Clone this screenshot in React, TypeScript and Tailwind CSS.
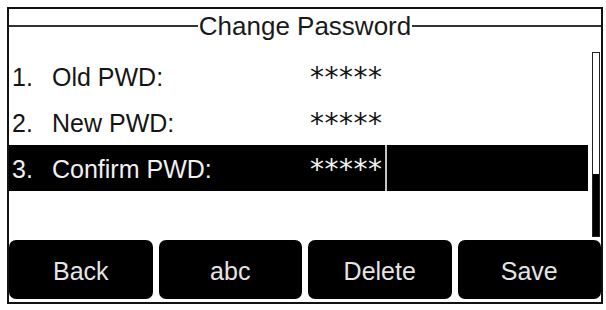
const rows = [
  { n: '1.', label: 'Old PWD:', value: '*****' },
  { n: '2.', label: 'New PWD:', value: '*****' },
  { n: '3.', label: 'Confirm PWD:', value: '*****', active: true },
]

const softkeys = ['Back', 'abc', 'Delete', 'Save']

export default function App() {
  return (
    <div className="w-[606px] h-[310px] bg-white pt-[7px] pl-[7px] font-['Liberation_Sans',Arial,sans-serif]">
      <div className="w-[596px] h-[297px] border-2 border-[#111] flex flex-col">
        {/* title bar */}
        <div className="h-[34px] flex items-center">
          <div className="flex-1 h-[2px] bg-[#333]" />
          <span className="px-[1px] text-[26px] leading-none text-[#1a1a1a]">Change Password</span>
          <div className="flex-1 h-[2px] bg-[#333]" />
        </div>

        <div className="mt-[10px] flex h-[187px]">
          <div className="w-[579px] flex flex-col">
            {rows.map((r) => (
              <div key={r.n} className="h-[46px] flex">
                <div
                  className={`w-[376px] flex items-center pl-[3px] pt-[2px] text-[25px] leading-none ${
                    r.active ? 'bg-black text-[#f0f0f0]' : 'text-[#151515]'
                  }`}
                >
                  <span className="w-[40px]">{r.n}</span>
                  <span className="w-[258px]">{r.label}</span>
                  <span className="font-['DejaVu_Sans',sans-serif] text-[28px] tracking-[0.5px] mt-[2px]">
                    {r.value}
                  </span>
                </div>
                <div className={`w-[2px] ${r.active ? 'bg-[#c4c4c4]' : ''}`} />
                <div className={`flex-1 ${r.active ? 'bg-black' : ''}`} />
              </div>
            ))}
          </div>
          {/* scrollbar */}
          <div className="ml-[4px] mt-[-1px] w-[8px] h-[185px] border-[1.5px] border-[#222] flex flex-col justify-end">
            <div className="h-[62px] bg-black" />
          </div>
        </div>

        <div className="grid grid-cols-4 gap-[6px] h-[59px]">
          {softkeys.map((k) => (
            <div
              key={k}
              className="bg-black rounded-[7px] flex items-center justify-center pt-[4px] text-[25px] leading-none text-[#e4e4e4]"
            >
              {k}
            </div>
          ))}
        </div>
      </div>
    </div>
  )
}
